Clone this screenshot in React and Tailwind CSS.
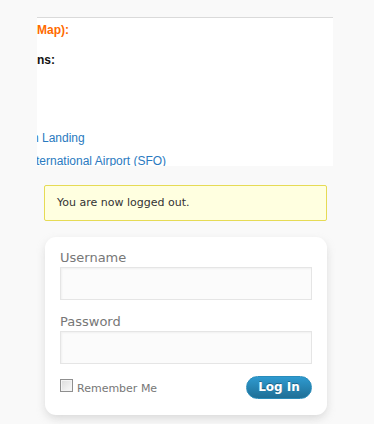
export default function App() {
  return (
    <div className="min-h-screen w-full bg-[#f9f9f9] pt-[17px] pb-[20px] font-['DejaVu_Sans',Verdana,sans-serif]">
      {/* scrolled content panel */}
      <div className="ml-[37px] h-[149px] w-[296px] overflow-hidden border-t border-[#dadada] bg-white font-['Liberation_Sans',Arial,sans-serif] text-[12px] leading-[16px] whitespace-nowrap">
        <div className="mt-[4px] font-bold text-[#ff6a00]">Map):</div>
        <div className="mt-[14px] font-bold text-[#111]">ns:</div>
        <div className="mt-[62px] -ml-[5px] text-[#2a7ac0]">n Landing</div>
        <div className="mt-[7px] -ml-[1px] text-[#2a7ac0]">ternational Airport (SFO)</div>
      </div>

      {/* logged out message */}
      <div className="ml-[44px] mt-[19px] w-[283px] rounded-[2px] border border-[#e6db55] bg-[#ffffe0] px-[12px] py-[10px] text-[11px] leading-[14px] text-[#333]">
        You are now logged out.
      </div>

      {/* login form */}
      <form className="ml-[45px] mt-[16px] w-[282px] rounded-[11px] bg-white px-[15px] pt-[13px] pb-[16px] shadow-[0_4px_10px_-1px_rgba(200,200,200,0.7)]">
        <label className="block text-[13px] leading-[15px] text-[#777]">Username</label>
        <div className="mt-[2px] h-[33px] w-full border border-[#e5e5e5] bg-[#fbfbfb] shadow-[inset_1px_1px_2px_rgba(200,200,200,0.2)]"></div>

        <label className="mt-[14px] block text-[13px] leading-[15px] text-[#777]">Password</label>
        <div className="mt-[2px] h-[33px] w-full border border-[#e5e5e5] bg-[#fbfbfb] shadow-[inset_1px_1px_2px_rgba(200,200,200,0.2)]"></div>

        <div className="mt-[12px] flex items-start justify-between">
          <div className="flex items-start gap-[4px]">
            <span className="mt-[3px] block h-[13px] w-[13px] border border-[#8f8f8f] bg-gradient-to-br from-[#dcdcdc] to-[#fafafa] shadow-[inset_0_0_0_1px_#f4f4f4]"></span>
            <span className="mt-[6px] text-[11px] leading-[13px] text-[#777]">Remember Me</span>
          </div>
          <button
            type="button"
            className="h-[23px] w-[66px] rounded-full border border-[#298cba] bg-gradient-to-b from-[#2e9ad0] to-[#1f6f96] text-[12px] font-bold leading-[21px] text-white [text-shadow:0_-1px_0_rgba(0,0,0,0.3)]"
          >
            Log In
          </button>
        </div>
      </form>
    </div>
  )
}
